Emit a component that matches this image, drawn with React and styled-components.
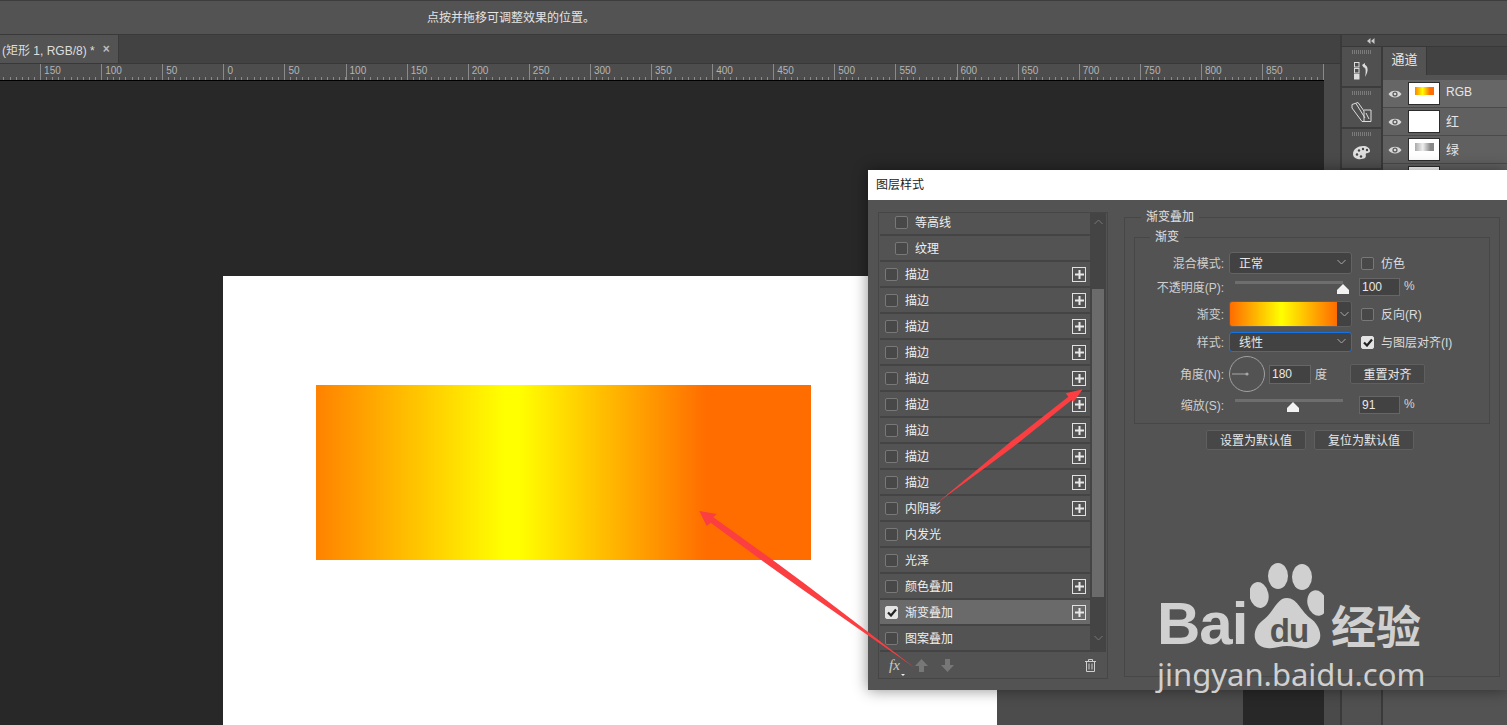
import React from 'react';
import styled, { createGlobalStyle } from 'styled-components';

const GlobalStyle = createGlobalStyle`
  html, body { margin: 0; padding: 0; background: #282828; }
  body { font-family: 'Liberation Sans', 'Noto Sans CJK SC', sans-serif; font-size: 12px; color: #dcdcdc; }
  * { box-sizing: border-box; }
`;

const Page = styled.div`
  position: relative;
  width: 1507px;
  height: 725px;
  overflow: hidden;
  display: flex;
  flex-direction: column;
`;

const OptionsBar = styled.div`
  height: 35px;
  flex: none;
  background: #535353;
  border-top: 1px solid #3d3d3d;
  border-bottom: 1px solid #3a3a3a;
  padding-left: 427px;
  line-height: 35px;
  color: #e4e4e4;
`;

const Main = styled.div`
  flex: 1;
  display: flex;
  min-height: 0;
`;

const Editor = styled.div`
  width: 1340px;
  flex: none;
  display: flex;
  flex-direction: column;
  background: #4a4a4a;
`;

const TabBar = styled.div`
  height: 29px;
  flex: none;
  background: #424242;
  border-bottom: 1px solid #383838;
  display: flex;
`;

const DocTab = styled.div`
  width: 119px;
  background: #535353;
  border-right: 1px solid #3a3a3a;
  padding-left: 2px;
  display: flex;
  align-items: center;
  color: #dedede;
  font-size: 12px;
`;

const TabClose = styled.span`
  margin-left: 8px;
  font-size: 12px;
  font-weight: bold;
  color: #bdbdbd;
`;

const EditorBody = styled.div`
  flex: 1;
  display: flex;
  min-height: 0;
`;

const CanvasColumn = styled.div`
  width: 1324px;
  flex: none;
  display: flex;
  flex-direction: column;
  background: #282828;
`;

const Ruler = styled.div`
  height: 17px;
  flex: none;
  background: #4d4d4d;
  border-bottom: 1px solid #000;
  overflow: hidden;
  display: flex;
`;

const RulerCell = styled.div`
  flex: none;
  width: 61.1px;
  margin-left: ${(p) => p.$ml || 0}px;
  height: 16px;
  border-left: 1px solid #8a8a8a;
  padding-left: 3px;
  font-size: 10px;
  line-height: 14px;
  color: #b4b4b4;
  background-image: repeating-linear-gradient(to right, transparent 0, transparent 5.11px, #8a8a8a 5.11px, #8a8a8a 6.11px);
  background-size: 100% 3px;
  background-position: 0 100%;
  background-repeat: no-repeat;
`;

const Workspace = styled.div`
  flex: 1;
  min-height: 0;
  padding-top: 195px;
  display: flex;
`;

const Document = styled.div`
  margin-left: 223px;
  width: 774px;
  flex: none;
  background: #fff;
  padding: 109px 0 0 93px;
`;

const GradientRect = styled.div`
  width: 495px;
  height: 175px;
  background: linear-gradient(to right, #ff8200 0%, #ffff00 38%, #ffff00 41%, #ff6c00 79%, #ff6c00 100%);
`;

const Pasteboard = styled.div`
  width: 246px;
  flex: none;
  background: #4c4c4c;
`;

const RightStrip = styled.div`
  width: 16px;
  flex: none;
  background: #4a4a4a;
`;

const Dock = styled.div`
  width: 43px;
  flex: none;
  background: #424242;
  border-left: 2px solid #3a3a3a;
  display: flex;
  flex-direction: column;
`;

const CollapseBar = styled.div`
  height: 12px;
  flex: none;
  display: flex;
  align-items: center;
  padding-left: 25px;
  background: #474747;
  border-bottom: 1px solid #383838;
`;

const DockCell = styled.div`
  height: 41px;
  flex: none;
  border-bottom: 2px solid #3c3c3c;
  border-right: 2px solid #3a3a3a;
  background: #505050;
  display: flex;
  flex-direction: column;
  align-items: center;
  padding-top: 3px;
`;

const DockFill = styled.div`
  flex: 1;
  background: #505050;
  border-right: 2px solid #3a3a3a;
`;

const Grip = styled.div`
  width: 20px;
  height: 4px;
  flex: none;
  background: repeating-linear-gradient(to right, #7a7a7a 0, #7a7a7a 1px, transparent 1px, transparent 2px);
`;

const ChannelsPanel = styled.div`
  flex: 1;
  min-width: 0;
  background: #535353;
  display: flex;
  flex-direction: column;
`;

const PanelTopBar = styled.div`
  height: 12px;
  flex: none;
  background: #474747;
  border-bottom: 1px solid #383838;
`;

const PanelTabs = styled.div`
  height: 28px;
  flex: none;
  background: #424242;
  display: flex;
  margin-bottom: 5px;
`;

const PanelTab = styled.div`
  width: 44px;
  background: #535353;
  border-right: 1px solid #383838;
  text-align: center;
  line-height: 26px;
  color: #e8e8e8;
  font-size: 13px;
`;

const ChannelRow = styled.div`
  height: 28px;
  flex: none;
  display: flex;
  align-items: center;
  padding-left: 5px;
  border-bottom: 1px solid #4a4a4a;
  background: ${(p) => (p.$active ? '#666666' : '#606060')};
  color: #e6e6e6;
`;

const EyeSlot = styled.div`
  width: 14px;
  height: 10px;
  flex: none;
  display: flex;
`;

const Thumb = styled.div`
  width: 32px;
  height: 23px;
  flex: none;
  margin-left: 6px;
  border: 1px solid #2c2c2c;
  background: #fff;
  display: flex;
  align-items: flex-start;
  justify-content: center;
  padding-top: 4px;
`;

const ThumbBar = styled.div`
  width: 19px;
  height: 8px;
  background: ${(p) => p.$fill};
`;

const ChannelName = styled.span`
  margin-left: 6px;
  padding-bottom: 3px;
  font-size: ${(p) => p.$size || 12}px;
`;

// layer style dialog floats over the canvas like a real window
const Dialog = styled.div`
  position: absolute;
  left: 868px;
  top: 170px;
  width: 639px;
  height: 520px;
  background: #535353;
  box-shadow: 0 0 14px rgba(0, 0, 0, 0.45);
  display: flex;
  flex-direction: column;
`;

const DialogTitle = styled.div`
  height: 30px;
  flex: none;
  background: #fff;
  color: #222;
  padding-left: 8px;
  line-height: 30px;
  font-size: 12px;
`;

const DialogBody = styled.div`
  flex: 1;
  display: flex;
  padding: 12px 0 0 10px;
  min-height: 0;
`;

const StyleBox = styled.div`
  width: 230px;
  height: 467px;
  flex: none;
  border: 1px solid #464646;
  padding: 0 1px;
  display: flex;
  flex-direction: column;
`;

const ListArea = styled.div`
  height: 439px;
  flex: none;
  display: flex;
  overflow: hidden;
  border-bottom: 1px solid #444;
`;

const StyleList = styled.div`
  flex: 1;
  margin-top: -3px;
`;

const StyleRow = styled.div`
  height: 26px;
  display: flex;
  align-items: center;
  border-bottom: 2px solid #444444;
  padding-left: ${(p) => (p.$indent ? 15 : 5)}px;
  background: ${(p) => (p.$active ? '#6a6a6a' : 'transparent')};
  color: #efefef;
`;

const Check = styled.div`
  width: 13px;
  height: 13px;
  flex: none;
  border-radius: 2px;
  border: 1px solid ${(p) => (p.$on ? '#e4e4e4' : '#787878')};
  background: ${(p) => (p.$on ? '#e4e4e4' : '#484848')};
  margin-left: ${(p) => p.$ml || 0}px;
  display: flex;
  align-items: center;
  justify-content: center;
`;

const RowLabel = styled.span`
  margin-left: 7px;
  flex: 1;
  padding-bottom: 2px;
`;

const PlusBox = styled.div`
  width: 14px;
  height: 15px;
  flex: none;
  margin-right: 4px;
  border: 1px solid #e0e0e0;
  display: flex;
  align-items: center;
  justify-content: center;
`;

const ScrollTrack = styled.div`
  width: 16px;
  flex: none;
  background: #444444;
  display: flex;
  flex-direction: column;
  align-items: center;
`;

const ScrollThumb = styled.div`
  width: 12px;
  height: 308px;
  background: #6b6b6b;
  margin-top: 60px;
  margin-bottom: 38px;
`;

const ScrollArrow = styled.div`
  height: 10px;
  margin-top: ${(p) => p.$mt || 0}px;
  display: flex;
`;

const ListFooter = styled.div`
  flex: 1;
  display: flex;
  align-items: center;
  padding-left: 9px;
  position: relative;
`;

const FxLabel = styled.span`
  font-family: 'Liberation Serif', serif;
  font-style: italic;
  font-size: 15px;
  color: #c8c8c8;
  width: 26px;
`;

const FxCaret = styled.i`
  position: absolute;
  left: 21px;
  bottom: 2px;
  width: 0;
  height: 0;
  border: 2px solid transparent;
  border-top: 2px solid #eee;
  border-bottom: 0;
`;

const FooterIcon = styled.div`
  display: flex;
  margin-right: 13px;
`;

const FooterTrash = styled.div`
  display: flex;
  margin-left: auto;
  margin-right: 10px;
`;

const OuterGroup = styled.fieldset`
  width: 376px;
  height: 468px;
  margin: -3px 0 0 16px;
  padding: 4px 9px 0;
  border: 1px solid #474747;
  min-inline-size: 0;
`;

const GroupLegend = styled.legend`
  margin-left: ${(p) => p.$ml}px;
  padding: 0 5px;
  line-height: 16px;
  color: #e0e0e0;
`;

const InnerGroup = styled.fieldset`
  margin: 0;
  padding: 7px 0 9px;
  border: 1px solid #474747;
  min-inline-size: 0;
`;

const FormRow = styled.div`
  display: flex;
  align-items: center;
  height: ${(p) => p.$h}px;
  margin-top: ${(p) => p.$mt || 0}px;
`;

const FormLabel = styled.label`
  width: 89px;
  flex: none;
  text-align: right;
  color: #cfcfcf;
  padding-bottom: 2px;
`;

const Select = styled.div`
  width: 123px;
  height: 100%;
  flex: none;
  margin-left: 5px;
  padding: 0 5px 2px 9px;
  border-radius: 3px;
  background: #424242;
  border: 1px solid ${(p) => (p.$focus ? '#1473e6' : '#636363')};
  display: flex;
  align-items: center;
  justify-content: space-between;
  color: #e6e6e6;
`;

const GradientPicker = styled.div`
  width: 123px;
  height: 100%;
  flex: none;
  margin-left: 5px;
  display: flex;
  border: 1px solid #5f5f5f;
  border-radius: 3px;
  overflow: hidden;
`;

const GradientSwatch = styled.div`
  flex: 1;
  background: linear-gradient(to right, #ff6c00 0%, #ffff00 48%, #ff6c00 100%);
`;

const GradientCaret = styled.div`
  width: 14px;
  background: #424242;
  display: flex;
  align-items: center;
  justify-content: center;
`;

const CheckLabel = styled.span`
  margin-left: 7px;
  color: #dcdcdc;
  padding-bottom: 2px;
`;

const Slider = styled.div`
  position: relative;
  width: 108px;
  height: 100%;
  flex: none;
  margin-left: 11px;
`;

const SliderTrack = styled.div`
  margin-top: 3px;
  height: 3px;
  background: #6e6e6e;
`;

const SliderThumb = styled.div`
  position: absolute;
  top: 6px;
  left: ${(p) => p.$left}px;
  width: 12px;
  height: 10px;
  background: #f2f2f2;
  clip-path: polygon(50% 0, 100% 60%, 100% 100%, 0 100%, 0 60%);
`;

const NumberInput = styled.div`
  width: ${(p) => p.$w}px;
  height: ${(p) => p.$h || 18}px;
  flex: none;
  margin-left: ${(p) => p.$ml}px;
  background: #424242;
  border: 1px solid #666;
  padding-left: 2px;
  display: flex;
  align-items: center;
  color: #e8e8e8;
`;

const Unit = styled.span`
  margin-left: 4px;
  color: #d4d4d4;
  padding-bottom: 2px;
`;

const Dial = styled.div`
  display: flex;
  margin-left: 5px;
  flex: none;
`;

const FlatButton = styled.button`
  height: 20px;
  width: ${(p) => p.$w}px;
  flex: none;
  margin-left: ${(p) => p.$ml || 0}px;
  padding: 0 0 2px;
  background: #474747;
  border: 1px solid #5f5f5f;
  border-radius: 2px;
  color: #e8e8e8;
  font: inherit;
`;

const ButtonRow = styled.div`
  display: flex;
  gap: 8px;
  margin: 6px 0 0 72px;
`;

const ArrowsLayer = styled.svg`
  position: absolute;
  left: 0;
  top: 0;
  pointer-events: none;
`;

const Watermark = styled.div`
  position: absolute;
  left: 1157px;
  top: 563px;
  width: 290px;
  color: #d0d0d0;
  pointer-events: none;
`;

const LogoLine = styled.div`
  display: flex;
  align-items: flex-end;
  height: 88px;
`;

const LogoBai = styled.span`
  width: 90px;
  flex: none;
  font-family: 'Liberation Sans', sans-serif;
  font-weight: bold;
  font-size: 60px;
  line-height: 60px;
  letter-spacing: -1px;
  margin-bottom: -3px;
`;

const PawSlot = styled.div`
  display: flex;
  flex: none;
  margin-left: 3px;
`;

const LogoJingyan = styled.span`
  font-family: 'Noto Sans CJK SC', sans-serif;
  font-weight: 700;
  font-size: 45px;
  line-height: 44px;
  margin-left: 7px;
  margin-bottom: 4px;
  white-space: nowrap;
`;

const LogoUrl = styled.div`
  font-family: 'Noto Sans', sans-serif;
  font-size: 31px;
  line-height: 40px;
  margin-top: 3px;
  white-space: nowrap;
`;

const rulerLabels = ['', 150, 100, 50, 0, 50, 100, 150, 200, 250, 300, 350, 400, 450, 500, 550, 600, 650, 700, 750, 800, 850, ''];

const styleRows = [
  { name: '等高线', indent: true },
  { name: '纹理', indent: true },
  { name: '描边', plus: true },
  { name: '描边', plus: true },
  { name: '描边', plus: true },
  { name: '描边', plus: true },
  { name: '描边', plus: true },
  { name: '描边', plus: true },
  { name: '描边', plus: true },
  { name: '描边', plus: true },
  { name: '描边', plus: true },
  { name: '内阴影', plus: true },
  { name: '内发光' },
  { name: '光泽' },
  { name: '颜色叠加', plus: true },
  { name: '渐变叠加', plus: true, on: true },
  { name: '图案叠加' },
];

const Caret = ({ up, color = '#a8a8a8' }) => (
  <svg width="9" height="6" viewBox="0 0 9 6" fill="none" stroke={color} strokeWidth="1">
    <path d={up ? 'M0.5 5 L4.5 1 L8.5 5' : 'M0.5 1 L4.5 5 L8.5 1'} />
  </svg>
);

const CollapseIcon = () => (
  <svg width="8" height="6" viewBox="0 0 8 6" fill="#c8c8c8">
    <path d="M3.5 0V6L0 3zM7.5 0V6L4 3z" />
  </svg>
);

const Tick = () => (
  <svg width="10" height="9" viewBox="0 0 10 9" fill="none" stroke="#222" strokeWidth="2.2">
    <path d="M1 4.5 L4 7.5 L9 1.5" />
  </svg>
);

const Plus = () => (
  <svg width="9" height="9" viewBox="0 0 9 9" fill="#e8e8e8">
    <path d="M3.5 0h2v3.5h3.5v2h-3.5v3.5h-2v-3.5h-3.5v-2h3.5z" />
  </svg>
);

const Eye = () => (
  <EyeSlot>
    <svg width="14" height="10" viewBox="0 0 14 10">
      <path d="M0.5 5 C3 0.5 11 0.5 13.5 5 C11 9.5 3 9.5 0.5 5 Z" fill="#d8d8d8" />
      <circle cx="7" cy="5" r="2.6" fill="#5a5a5a" />
      <circle cx="7" cy="5" r="1.3" fill="#d8d8d8" />
    </svg>
  </EyeSlot>
);

const HistoryIcon = () => (
  <svg width="16" height="18" viewBox="0 0 16 18" style={{ marginTop: 8 }}>
    <rect x="0.5" y="0.5" width="4.5" height="4.5" fill="none" stroke="#ddd" />
    <rect x="0.5" y="6.5" width="4.5" height="4.5" fill="none" stroke="#ddd" />
    <rect x="0" y="12" width="5.5" height="5.5" fill="#ddd" />
    <path d="M8 3 L11 1 L11 3 C14 4 15 9 11 15 C12 11 12 6.5 10.5 5 L10.5 6.5 Z" fill="#ddd" />
  </svg>
);

const ShapeIcon = () => (
  <svg width="21" height="20" viewBox="0 0 21 20" fill="none" stroke="#ddd" style={{ marginTop: 7 }}>
    <path d="M1 2.5 L7 0.5 L13 9 L13 19.5 L20 19.5 L20 8 L13 8" />
    <path d="M1 2.5 L1 6 L11 19.5 L13 19.5" />
    <path d="M5 1.5 L14 16" />
    <path d="M15 11 L18 17" />
  </svg>
);

const PaletteIcon = () => (
  <svg width="19" height="15" viewBox="0 0 19 15" style={{ marginTop: 9 }}>
    <path d="M1 9 C1 4 6 1 11 1 C15 1 18 3 18 6 C18 8 15 8 14 8.5 C13 9.5 15 11 13 13 C10 15 1 15 1 9 Z" fill="#dedede" />
    <circle cx="5" cy="9.5" r="1.2" fill="#444" />
    <circle cx="7" cy="5.5" r="1.2" fill="#444" />
    <circle cx="11" cy="4" r="1.2" fill="#444" />
    <circle cx="15" cy="5" r="1.2" fill="#444" />
    <circle cx="9" cy="11.5" r="1.2" fill="#444" />
  </svg>
);

const BlockArrow = ({ down }) => (
  <svg width="13" height="13" viewBox="0 0 13 13" fill="#777">
    <path d={down ? 'M4 0h5v6h4l-6.5 7L0 6h4z' : 'M4 13h5V7h4L6.5 0 0 7h4z'} />
  </svg>
);

const TrashIcon = () => (
  <svg width="11" height="13" viewBox="0 0 11 13" fill="none" stroke="#cfcfcf">
    <path d="M0 2.5H11M3.5 2.5V0.5H7.5V2.5M1.5 2.5V12.5H9.5V2.5M4 4.5V10.5M7 4.5V10.5" />
  </svg>
);

const PawLogo = () => (
  <svg width="74" height="88" viewBox="0 0 74 88">
    <ellipse cx="28" cy="13" rx="10" ry="13" fill="#d0d0d0" />
    <ellipse cx="52" cy="14" rx="10" ry="13" fill="#d0d0d0" />
    <ellipse cx="9" cy="32" rx="9.5" ry="13" fill="#d0d0d0" transform="rotate(-12 9 32)" />
    <ellipse cx="67" cy="40" rx="9.5" ry="13" fill="#d0d0d0" transform="rotate(-14 67 40)" />
    <path d="M37 35 C47 35 50 47 60 55 C72 63 76 82 58 85 C49 86 44 83 37 83 C30 83 25 86 17 85 C1 83 2 66 12 58 C24 50 26 35 37 35 Z" fill="#d0d0d0" />
    <text x="39" y="79" textAnchor="middle" fontFamily="Liberation Sans" fontWeight="bold" fontSize="33" fill="#535353" letterSpacing="-1">du</text>
  </svg>
);

export default function App() {
  return (
    <Page>
      <GlobalStyle />
      <OptionsBar>点按并拖移可调整效果的位置。</OptionsBar>
      <Main>
        <Editor>
          <TabBar>
            <DocTab>
              (矩形 1, RGB/8) *<TabClose>×</TabClose>
            </DocTab>
          </TabBar>
          <EditorBody>
            <CanvasColumn>
              <Ruler>
                {rulerLabels.map((n, i) => (
                  <RulerCell key={i} $ml={i === 0 ? -21 : 0}>{n}</RulerCell>
                ))}
              </Ruler>
              <Workspace>
                <Document>
                  <GradientRect />
                </Document>
                <Pasteboard />
              </Workspace>
            </CanvasColumn>
            <RightStrip />
          </EditorBody>
        </Editor>
        <Dock>
          <CollapseBar><CollapseIcon /></CollapseBar>
          <DockCell><Grip /><HistoryIcon /></DockCell>
          <DockCell><Grip /><ShapeIcon /></DockCell>
          <DockCell><Grip /><PaletteIcon /></DockCell>
          <DockFill />
        </Dock>
        <ChannelsPanel>
          <PanelTopBar />
          <PanelTabs>
            <PanelTab>通道</PanelTab>
          </PanelTabs>
          <ChannelRow $active>
            <Eye />
            <Thumb><ThumbBar $fill="linear-gradient(to right, #ff8200, #ffff00 40%, #ff6c00 79%)" /></Thumb>
            <ChannelName>RGB</ChannelName>
          </ChannelRow>
          <ChannelRow>
            <Eye />
            <Thumb />
            <ChannelName $size={13}>红</ChannelName>
          </ChannelRow>
          <ChannelRow>
            <Eye />
            <Thumb><ThumbBar $fill="linear-gradient(to right, #aaa, #eee 41%, #888 81%)" /></Thumb>
            <ChannelName $size={13}>绿</ChannelName>
          </ChannelRow>
          <ChannelRow>
            <Eye />
            <Thumb />
          </ChannelRow>
        </ChannelsPanel>
      </Main>

      <Dialog>
        <DialogTitle>图层样式</DialogTitle>
        <DialogBody>
          <StyleBox>
            <ListArea>
              <StyleList>
                {styleRows.map((row, i) => (
                  <StyleRow key={i} $indent={row.indent} $active={row.on}>
                    <Check $on={row.on}>{row.on && <Tick />}</Check>
                    <RowLabel>{row.name}</RowLabel>
                    {row.plus && <PlusBox><Plus /></PlusBox>}
                  </StyleRow>
                ))}
              </StyleList>
              <ScrollTrack>
                <ScrollArrow $mt={6}><Caret up color="#777" /></ScrollArrow>
                <ScrollThumb />
                <ScrollArrow><Caret color="#777" /></ScrollArrow>
              </ScrollTrack>
            </ListArea>
            <ListFooter>
              <FxLabel>fx</FxLabel>
              <FxCaret />
              <FooterIcon><BlockArrow /></FooterIcon>
              <FooterIcon><BlockArrow down /></FooterIcon>
              <FooterTrash><TrashIcon /></FooterTrash>
            </ListFooter>
          </StyleBox>

          <OuterGroup>
            <GroupLegend $ml={7}>渐变叠加</GroupLegend>
            <InnerGroup>
              <GroupLegend $ml={15}>渐变</GroupLegend>
              <FormRow $h={22}>
                <FormLabel>混合模式:</FormLabel>
                <Select>正常<Caret /></Select>
                <Check $ml={9} />
                <CheckLabel>仿色</CheckLabel>
              </FormRow>
              <FormRow $h={18} $mt={4}>
                <FormLabel>不透明度(P):</FormLabel>
                <Slider>
                  <SliderTrack />
                  <SliderThumb $left={102} />
                </Slider>
                <NumberInput $w={41} $ml={16}>100</NumberInput>
                <Unit>%</Unit>
              </FormRow>
              <FormRow $h={26} $mt={5}>
                <FormLabel>渐变:</FormLabel>
                <GradientPicker>
                  <GradientSwatch />
                  <GradientCaret><Caret /></GradientCaret>
                </GradientPicker>
                <Check $ml={9} />
                <CheckLabel>反向(R)</CheckLabel>
              </FormRow>
              <FormRow $h={20} $mt={5}>
                <FormLabel>样式:</FormLabel>
                <Select $focus>线性<Caret /></Select>
                <Check $ml={9} $on><Tick /></Check>
                <CheckLabel>与图层对齐(I)</CheckLabel>
              </FormRow>
              <FormRow $h={36} $mt={4}>
                <FormLabel>角度(N):</FormLabel>
                <Dial>
                  <svg width="36" height="36" viewBox="0 0 36 36" fill="none">
                    <circle cx="18" cy="18" r="17.5" stroke="#a0a0a0" />
                    <path d="M3 18H18" stroke="#9a9a9a" strokeWidth="1.2" />
                    <circle cx="18" cy="18" r="1.6" fill="#a8a8a8" />
                  </svg>
                </Dial>
                <NumberInput $w={42} $ml={4} $h={19}>180</NumberInput>
                <Unit>度</Unit>
                <FlatButton $w={75} $ml={23}>重置对齐</FlatButton>
              </FormRow>
              <FormRow $h={18} $mt={4}>
                <FormLabel>缩放(S):</FormLabel>
                <Slider>
                  <SliderTrack />
                  <SliderThumb $left={52} />
                </Slider>
                <NumberInput $w={41} $ml={16}>91</NumberInput>
                <Unit>%</Unit>
              </FormRow>
            </InnerGroup>
            <ButtonRow>
              <FlatButton $w={100}>设置为默认值</FlatButton>
              <FlatButton $w={100}>复位为默认值</FlatButton>
            </ButtonRow>
          </OuterGroup>
        </DialogBody>
      </Dialog>

      <ArrowsLayer width="1507" height="725" viewBox="0 0 1507 725">
        <path d="M699.3 511 L716.7 514 L713.3 517.3 L769 557.3 L806.8 585.3 L862.5 627.8 L915 668 L860.7 630.2 L803.2 590.1 L765 562.7 L710.7 522.7 L706.7 526 Z" fill="#fa3e42" />
        <path d="M1082.7 389.3 L1073.3 402.3 L1071.7 400 L1013.7 446.5 L989.6 464.4 L937 503 L987.2 461.2 L1010.3 442.1 L1068.3 396.7 L1065.7 393.3 Z" fill="#fa3e42" />
      </ArrowsLayer>

      <Watermark>
        <LogoLine>
          <LogoBai>Bai</LogoBai>
          <PawSlot><PawLogo /></PawSlot>
          <LogoJingyan>经验</LogoJingyan>
        </LogoLine>
        <LogoUrl>jingyan.baidu.com</LogoUrl>
      </Watermark>
    </Page>
  );
}
